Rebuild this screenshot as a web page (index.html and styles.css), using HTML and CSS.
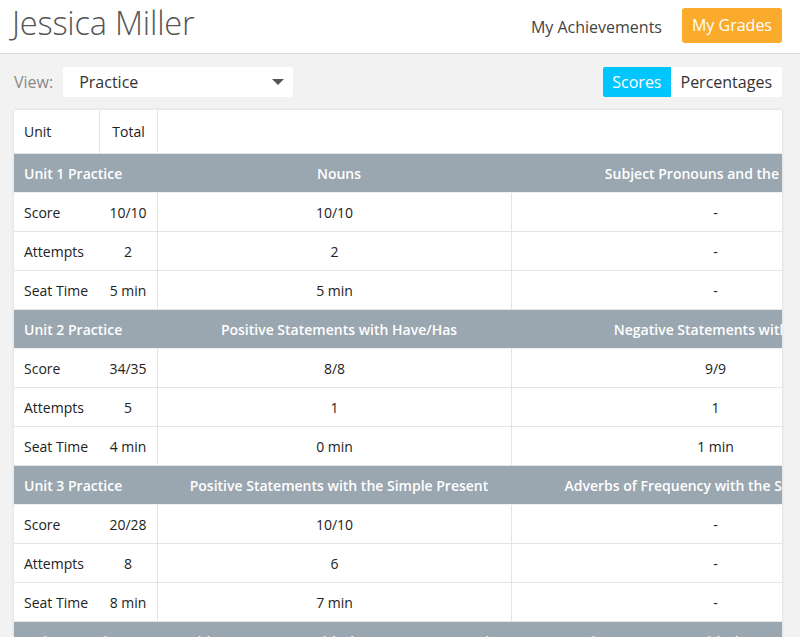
FILE: index.html
```html
<!DOCTYPE html>
<html lang="en">
<head>
<meta charset="utf-8">
<title>Jessica Miller - My Grades</title>
<link rel="stylesheet" href="styles.css">
</head>
<body>
<header class="topbar">
  <h1 class="name">Jessica Miller</h1>
  <nav class="nav">
    <a class="nav-link">My Achievements</a>
    <a class="nav-btn">My Grades</a>
  </nav>
</header>
<main class="content">
  <div class="toolbar">
    <div class="view">
      <span class="view-label">View:</span>
      <div class="select">
        <span>Practice</span>
        <span class="caret"></span>
      </div>
    </div>
    <div class="toggle">
      <span class="toggle-item active">Scores</span>
      <span class="toggle-item">Percentages</span>
    </div>
  </div>
  <div class="card">
    <table class="grades">
      <colgroup>
        <col class="c-label"><col class="c-total"><col class="c-a"><col class="c-b"><col class="c-c">
      </colgroup>
      <tr class="head">
        <td class="lbl bordered">Unit</td>
        <td class="tot bordered">Total</td>
        <td colspan="3"></td>
      </tr>
      <tr class="group">
        <td colspan="2" class="lbl">Unit 1 Practice</td>
        <td>Nouns</td>
        <td>Subject Pronouns and the Verb Be</td>
        <td>Possessive Adjectives</td>
      </tr>
      <tr><td class="lbl">Score</td><td class="tot">10/10</td><td>10/10</td><td>-</td><td>-</td></tr>
      <tr><td class="lbl">Attempts</td><td class="tot">2</td><td>2</td><td>-</td><td>-</td></tr>
      <tr><td class="lbl">Seat Time</td><td class="tot">5 min</td><td>5 min</td><td>-</td><td>-</td></tr>
      <tr class="group">
        <td colspan="2" class="lbl">Unit 2 Practice</td>
        <td>Positive Statements with Have/Has</td>
        <td>Negative Statements with Have</td>
        <td>Questions with Have/Has</td>
      </tr>
      <tr><td class="lbl">Score</td><td class="tot">34/35</td><td>8/8</td><td>9/9</td><td>-</td></tr>
      <tr><td class="lbl">Attempts</td><td class="tot">5</td><td>1</td><td>1</td><td>-</td></tr>
      <tr><td class="lbl">Seat Time</td><td class="tot">4 min</td><td>0 min</td><td>1 min</td><td>-</td></tr>
      <tr class="group">
        <td colspan="2" class="lbl">Unit 3 Practice</td>
        <td>Positive Statements with the Simple Present</td>
        <td>Adverbs of Frequency with the Simple Present</td>
        <td>Negative Statements</td>
      </tr>
      <tr><td class="lbl">Score</td><td class="tot">20/28</td><td>10/10</td><td>-</td><td>-</td></tr>
      <tr><td class="lbl">Attempts</td><td class="tot">8</td><td>6</td><td>-</td><td>-</td></tr>
      <tr><td class="lbl">Seat Time</td><td class="tot">8 min</td><td>7 min</td><td>-</td><td>-</td></tr>
      <tr class="group">
        <td colspan="2" class="lbl">Unit 4 Practice</td>
        <td>Positive Statements with the Present Progressive</td>
        <td>Negative Statements with the Present Progressive</td>
        <td>Questions</td>
      </tr>
      <tr><td class="lbl">Score</td><td class="tot">-</td><td>-</td><td>-</td><td>-</td></tr>
    </table>
  </div>
</main>
</body>
</html>
```
FILE: styles.css
```css
* { box-sizing: border-box; }
html, body { margin: 0; padding: 0; }
body {
  font-family: "Open Sans", "Liberation Sans", sans-serif;
  background: #f2f2f2;
  color: #222;
  overflow: hidden;
}
.topbar {
  height: 54px;
  background: #fff;
  border-bottom: 1px solid #dcdcdc;
  display: flex;
  align-items: center;
  justify-content: space-between;
  padding: 0 18px 0 12px;
}
.name {
  margin: 0;
  font-size: 32.5px;
  font-weight: 300;
  color: #555;
  letter-spacing: -0.2px;
  line-height: 1;
  margin-top: -6px;
}
.nav { display: flex; align-items: center; gap: 20px; }
.nav-link { font-size: 16px; color: #444; }
.nav-btn {
  font-size: 16px;
  color: #fff;
  background: #fbab2c;
  border-radius: 3px;
  height: 35px;
  line-height: 35px;
  padding: 0 10px;
  margin-top: -2px;
}
.content { padding: 12px 18px 0 14px; }
.toolbar {
  display: flex;
  justify-content: space-between;
  align-items: center;
  height: 31px;
  margin-bottom: 13px;
}
.view { display: flex; align-items: center; gap: 10px; }
.view-label { font-size: 16px; color: #888; }
.select {
  width: 230px;
  height: 30px;
  background: #fff;
  border-radius: 2px;
  display: flex;
  align-items: center;
  justify-content: space-between;
  padding: 0 9px 0 16px;
  font-size: 16px;
  color: #333;
}
.caret {
  width: 0; height: 0;
  border-left: 6px solid transparent;
  border-right: 6px solid transparent;
  border-top: 6px solid #555;
}
.toggle {
  display: flex;
  height: 30px;
  background: #fff;
  border-radius: 2px;
  overflow: hidden;
}
.toggle-item {
  font-size: 16px;
  line-height: 30px;
  padding: 0 10px;
  color: #333;
}
.toggle-item.active { background: #00c5ff; color: #fff; padding: 0 9px; }
.card {
  background: #fff;
  border-radius: 2px;
  box-shadow: 0 0 3px rgba(0,0,0,0.12);
  overflow: hidden;
}
.grades {
  border-collapse: separate;
  border-spacing: 0;
  table-layout: fixed;
  width: 1305px;
  font-size: 14px;
}
.c-label { width: 85px; }
.c-total { width: 58px; }
.c-a { width: 354px; }
.c-b { width: 408px; }
.c-c { width: 400px; }
.grades td {
  height: 39px;
  padding: 0;
  text-align: center;
  vertical-align: middle;
  border-bottom: 1px solid #e4e4e4;
  white-space: nowrap;
  overflow: hidden;
}
.grades tr:not(.group) td:nth-child(n+3) { border-left: 1px solid #e4e4e4; }
.grades td.lbl { text-align: left; padding-left: 10px; }
.grades tr.head td { height: 44px; }
.grades td.bordered + td.bordered,
.grades td.bordered + td { border-left: 1px solid #e4e4e4; }
.grades tr.group td {
  background: #9aa6b0;
  color: #fff;
  font-weight: 600;
  padding-left: 10px;
  border-bottom-color: #eef0f2;
}
```
